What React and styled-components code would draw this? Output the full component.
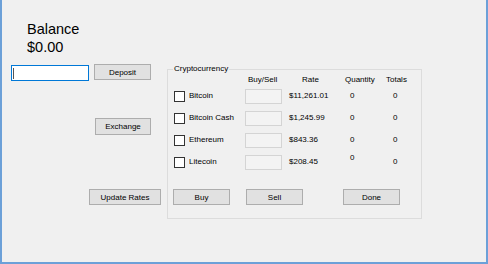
import React from "react";
import styled, { createGlobalStyle } from "styled-components";

const GlobalStyle = createGlobalStyle`
  html, body {
    margin: 0;
    padding: 0;
    background: #ffffff;
  }
  body {
    font-family: "Liberation Sans", Arial, sans-serif;
  }
`;

const coins = [
  { name: "Bitcoin", rate: "$11,261.01", qty: "0", total: "0" },
  { name: "Bitcoin Cash", rate: "$1,245.99", qty: "0", total: "0" },
  { name: "Ethereum", rate: "$843.36", qty: "0", total: "0" },
  { name: "Litecoin", rate: "$208.45", qty: "0", total: "0", raised: true },
];

export default function App() {
  return (
    <>
      <GlobalStyle />
      <Frame>
        <BalanceBlock>
          <div>Balance</div>
          <div>$0.00</div>
        </BalanceBlock>
        <Body>
          <LeftPane>
            <DepositRow>
              <AmountBox>
                <Caret />
              </AmountBox>
              <Button $w={57}>Deposit</Button>
            </DepositRow>
            <Button $w={56} $h={17} $x={93} $top={37}>
              Exchange
            </Button>
            <Button $w={72} $x={87} $top={54}>
              Update Rates
            </Button>
          </LeftPane>

          <GroupBox>
            <Legend>Cryptocurrency</Legend>
            <CoinGrid>
              <Cell />
              <Cell $x={3}>Buy/Sell</Cell>
              <Cell $x={20}>Rate</Cell>
              <Cell $x={5}>Quantity</Cell>
              <Cell $x={6}>Totals</Cell>
              {coins.map((c) => (
                <React.Fragment key={c.name}>
                  <CheckLabel>
                    <CheckBox />
                    {c.name}
                  </CheckLabel>
                  <Cell>
                    <AmountField />
                  </Cell>
                  <Cell $x={7}>{c.rate}</Cell>
                  <Cell $x={10} $raised={c.raised}>
                    {c.qty}
                  </Cell>
                  <Cell $x={13}>{c.total}</Cell>
                </React.Fragment>
              ))}
            </CoinGrid>
            <ButtonRow>
              <Button $w={57} $x={5}>Buy</Button>
              <Button $w={57} $x={16}>Sell</Button>
              <Button $w={57} $x={40}>Done</Button>
            </ButtonRow>
          </GroupBox>
        </Body>
      </Frame>
    </>
  );
}

const Frame = styled.div`
  width: 488px;
  height: 264px;
  box-sizing: border-box;
  background: #f0f0f0;
  border-left: 2px solid #6ca0d8;
  border-right: 2px solid #6ca0d8;
  border-bottom: 2px solid #6ca0d8;
  color: #000;
  font-size: 8px;
  overflow: hidden;
`;

const BalanceBlock = styled.div`
  padding: 20px 0 0 25px;
  height: 36px;
  font-size: 14.5px;
  line-height: 18px;
  margin-bottom: 8px;
`;

const Body = styled.div`
  display: flex;
  align-items: flex-start;
`;

const LeftPane = styled.div`
  width: 165px;
  display: flex;
  flex-direction: column;
  align-items: flex-start;
`;

const DepositRow = styled.div`
  display: flex;
  align-items: flex-start;
  gap: 5px;
  padding-left: 9px;
  height: 17px;
`;

const AmountBox = styled.div`
  width: 78px;
  height: 16px;
  margin-top: 1px;
  box-sizing: border-box;
  border: 1px solid #0078d7;
  background: #fff;
  display: flex;
  align-items: center;
  padding-left: 1px;
`;

const Caret = styled.span`
  width: 1px;
  height: 11px;
  background: #555;
`;

const Button = styled.div`
  width: ${(p) => p.$w}px;
  height: ${(p) => p.$h || 16}px;
  margin-left: ${(p) => p.$x || 0}px;
  margin-top: ${(p) => p.$top || 0}px;
  box-sizing: border-box;
  border: 1px solid #adadad;
  background: #e1e1e1;
  display: flex;
  align-items: center;
  justify-content: center;
  font-size: 8px;
  color: #000;
  flex-shrink: 0;
`;

const GroupBox = styled.fieldset`
  margin: 0;
  padding: 0;
  min-width: 0;
  width: 255px;
  height: 155px;
  box-sizing: border-box;
  border: 1px solid #dcdcdc;
`;

const Legend = styled.legend`
  margin-left: 5px;
  padding: 0 1px;
  font-size: 8px;
  line-height: 10px;
`;

const CoinGrid = styled.div`
  display: grid;
  grid-template-columns: 71px 37px 58px 40px 40px;
  grid-template-rows: 11px repeat(4, 22px);
  padding-left: 6px;
  align-items: center;
  line-height: 10px;
`;

const Cell = styled.div`
  padding-left: ${(p) => p.$x || 0}px;
  padding-bottom: ${(p) => (p.$raised ? 8 : 0)}px;
  white-space: nowrap;
  display: flex;
  align-items: center;
`;

const CheckLabel = styled.div`
  display: flex;
  align-items: center;
  gap: 4px;
  white-space: nowrap;
`;

const CheckBox = styled.span`
  width: 11px;
  height: 11px;
  box-sizing: border-box;
  border: 1px solid #333;
  background: #fff;
  flex-shrink: 0;
`;

const AmountField = styled.div`
  width: 37px;
  height: 15px;
  box-sizing: border-box;
  border: 1px solid #d4d4d4;
  background: #f3f3f3;
`;

const ButtonRow = styled.div`
  display: flex;
  margin-top: 16px;
`;
